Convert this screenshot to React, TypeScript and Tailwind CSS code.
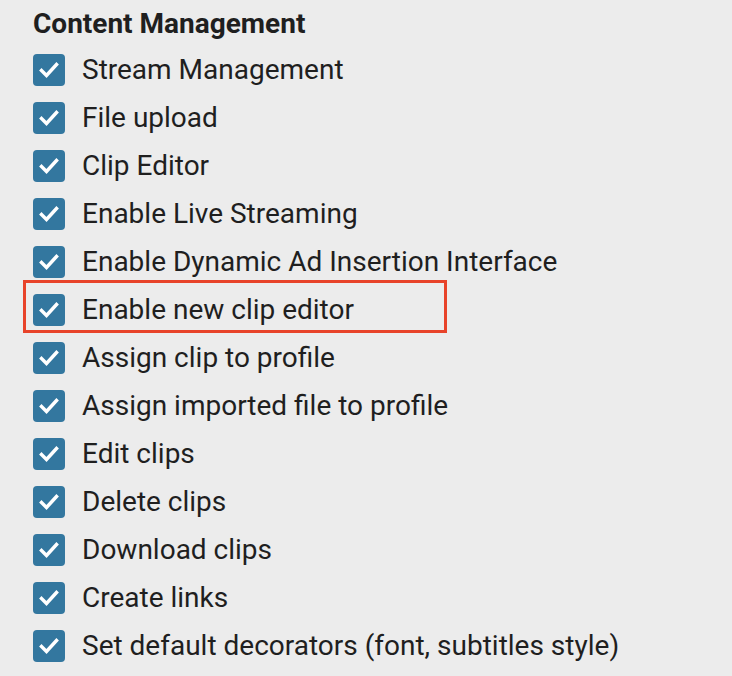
import React from 'react';

const items = [
  'Stream Management',
  'File upload',
  'Clip Editor',
  'Enable Live Streaming',
  'Enable Dynamic Ad Insertion Interface',
  'Enable new clip editor',
  'Assign clip to profile',
  'Assign imported file to profile',
  'Edit clips',
  'Delete clips',
  'Download clips',
  'Create links',
  'Set default decorators (font, subtitles style)',
];

const Check = () => (
  <span className="flex h-[32px] w-[32px] shrink-0 items-center justify-center rounded-[4px] bg-[#33779f]">
    <svg width="22" height="22" viewBox="0 0 22 22" fill="none">
      <path d="M3.5 11.5l5 5L18.5 5.5" stroke="white" strokeWidth="3.4" strokeLinecap="square" />
    </svg>
  </span>
);

export default function App() {
  return (
    <div className="min-h-screen bg-[#ececec] pl-[33px] pt-[8px] text-[#1f1f1f]" style={{ fontFamily: 'Roboto, sans-serif' }}>
      <h2 className="text-[28px] font-bold leading-[32px]">Content Management</h2>
      <div className="mt-[6px] flex flex-col">
        {items.map((label, i) => (
          <label
            key={label}
            className={
              i === 5
                ? 'relative flex h-[48px] items-center gap-[17px]'
                : 'flex h-[48px] items-center gap-[17px]'
            }
          >
            <Check />
            <span className="text-[28px] leading-none">{label}</span>
            {i === 5 && (
              <span className="pointer-events-none absolute left-[-10px] top-[-6px] h-[53px] w-[424px] border-[3px] border-[#e8432a]" />
            )}
          </label>
        ))}
      </div>
    </div>
  );
}
